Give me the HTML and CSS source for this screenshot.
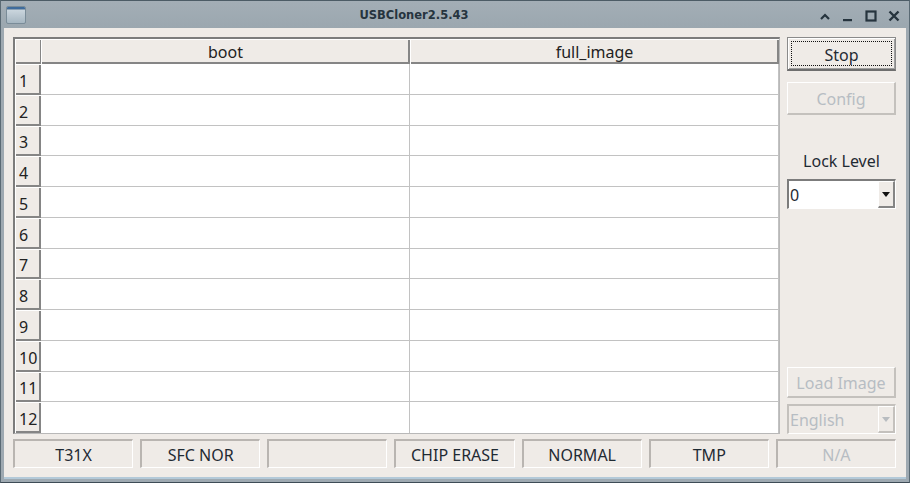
FILE: index.html
```html
<!DOCTYPE html>
<html>
<head>
<meta charset="utf-8">
<link rel="stylesheet" href="styles.css">
</head>
<body>
<div class="window">
  <div class="titlebar">
    <div class="appicon"><div class="appicon-bar"></div></div>
    <div class="title">USBCloner2.5.43</div>
    <div class="wbtns">
      <svg class="wbtn" width="12" height="12" viewBox="0 0 12 12"><path d="M2 9 L6 5 L10 9" fill="none" stroke="#26343e" stroke-width="2.2"/></svg>
      <svg class="wbtn" width="12" height="12" viewBox="0 0 12 12"><rect x="1" y="9" width="9" height="2.2" fill="#26343e"/></svg>
      <svg class="wbtn" width="12" height="12" viewBox="0 0 12 12"><rect x="1.5" y="1.5" width="9" height="9" fill="none" stroke="#26343e" stroke-width="2.2"/></svg>
      <svg class="wbtn" width="12" height="12" viewBox="0 0 12 12"><path d="M1.5 1.5 L10.5 10.5 M10.5 1.5 L1.5 10.5" fill="none" stroke="#26343e" stroke-width="2.4"/></svg>
    </div>
  </div>
  <div class="body">
    <div class="main">
      <div class="table">
        <div class="hcell corner"></div>
        <div class="hcell">boot</div>
        <div class="hcell">full_image</div>
        <div class="rh">1</div><div class="cell"></div><div class="cell"></div>
        <div class="rh">2</div><div class="cell"></div><div class="cell"></div>
        <div class="rh">3</div><div class="cell"></div><div class="cell"></div>
        <div class="rh">4</div><div class="cell"></div><div class="cell"></div>
        <div class="rh">5</div><div class="cell"></div><div class="cell"></div>
        <div class="rh">6</div><div class="cell"></div><div class="cell"></div>
        <div class="rh">7</div><div class="cell"></div><div class="cell"></div>
        <div class="rh">8</div><div class="cell"></div><div class="cell"></div>
        <div class="rh">9</div><div class="cell"></div><div class="cell"></div>
        <div class="rh">10</div><div class="cell"></div><div class="cell"></div>
        <div class="rh">11</div><div class="cell"></div><div class="cell"></div>
        <div class="rh last">12</div><div class="cell last"></div><div class="cell last"></div>
      </div>
      <div class="side">
        <div class="btn default"><span class="focus">Stop</span></div>
        <div class="btn disabled config">Config</div>
        <div class="lock-label">Lock Level</div>
        <div class="combo">
          <span class="combo-text">0</span>
          <span class="combo-arrow"><svg width="8" height="5" viewBox="0 0 8 5"><path d="M0 0 L8 0 L4 5 Z" fill="#111"/></svg></span>
        </div>
        <div class="spacer"></div>
        <div class="btn disabled load">Load Image</div>
        <div class="combo disabled">
          <span class="combo-text">English</span>
          <span class="combo-arrow"><svg width="8" height="5" viewBox="0 0 8 5"><path d="M0 0 L8 0 L4 5 Z" fill="#b8bcc0"/></svg></span>
        </div>
      </div>
    </div>
    <div class="status">
      <div class="slabel">T31X</div>
      <div class="slabel">SFC NOR</div>
      <div class="slabel"></div>
      <div class="slabel">CHIP ERASE</div>
      <div class="slabel">NORMAL</div>
      <div class="slabel">TMP</div>
      <div class="slabel dis">N/A</div>
    </div>
  </div>
</div>
</body>
</html>
```
FILE: styles.css
```css
* { box-sizing: border-box; }
html, body { margin: 0; padding: 0; }
body {
  width: 910px;
  height: 483px;
  overflow: hidden;
  font-family: "Noto Sans", "Open Sans", sans-serif;
  font-size: 16px;
  color: #1f2a33;
  background: #4a5a64;
}
.window {
  width: 910px;
  height: 483px;
  display: flex;
  flex-direction: column;
  background: #9ea9b1;
  border-top: 1px solid #4c5c66;
  border-left: 1px solid #5a6a74;
  border-right: 1px solid #5a6a74;
  border-bottom: 1px solid #3e4c56;
}
.titlebar {
  height: 27px;
  display: flex;
  align-items: center;
  position: relative;
  background: linear-gradient(#a3aeb6, #9ba7af);
}
.appicon {
  margin-left: 5px;
  width: 20px;
  height: 18px;
  border: 1px solid #7a8c98;
  border-radius: 2px;
  background: linear-gradient(#d3dde4, #a6b6c1);
  overflow: hidden;
}
.appicon-bar {
  height: 3px;
  background: #3f6c9c;
  border-bottom: 1px solid #8aa0b4;
}
.title {
  position: absolute;
  left: 0;
  width: 826px;
  text-align: center;
  font-family: "DejaVu Sans", sans-serif;
  font-weight: bold;
  font-size: 11.5px;
  color: #26343e;
  top: 7px;
  pointer-events: none;
}
.wbtns {
  margin-left: auto;
  margin-right: 9px;
  display: flex;
  gap: 11px;
  align-items: center;
  margin-top: 2px;
}
.body {
  flex: 1;
  margin: 0 3px 3px 3px;
  background: #efebe7;
  padding: 9px 10px 9px 9px;
  display: flex;
  flex-direction: column;
  gap: 5px;
  border-bottom: 2px solid #b3c9d8;
}
.main {
  flex: 1;
  display: flex;
  gap: 7px;
}
.table {
  flex: 1;
  display: grid;
  grid-template-columns: 26px 1fr 1fr;
  grid-template-rows: 25px repeat(12, 1fr);
  border-top: 2px solid #7c7c7c;
  border-left: 2px solid #7c7c7c;
  border-right: 1px solid #b8b8b8;
  border-bottom: 1px solid #b8b8b8;
  background: #fff;
}
.hcell {
  background: #efebe7;
  box-shadow: inset 1px 1px 0 #ffffff, inset -2px -2px 0 #858585;
  display: flex;
  align-items: center;
  justify-content: center;
  color: #222;
  padding-top: 1px;
}
.corner {
  box-shadow: inset 1px 1px 0 #ffffff, inset -1px -2px 0 #858585;
}
.rh {
  background: #efebe7;
  box-shadow: inset 1px 1px 0 #ffffff, inset -2px -2px 0 #858585;
  display: flex;
  align-items: center;
  padding-left: 4px;
  padding-top: 3px;
  color: #222;
}
.cell {
  background: #fff;
  border-right: 1px solid #c2c2c2;
  border-bottom: 1px solid #c2c2c2;
}
.cell.last { border-bottom: none; }
.side {
  width: 109px;
  display: flex;
  flex-direction: column;
}
.btn {
  display: flex;
  align-items: center;
  justify-content: center;
  background: #efebe7;
  color: #1f2a33;
  padding-top: 2px;
}
.btn.default {
  height: 34px;
  border: 1px solid #8a8a8a;
  border-bottom: 2px solid #6e6e6e;
  box-shadow: inset 1px 1px 0 #ffffff, inset -1px -1px 0 #a0a0a0;
  padding: 3px;
}
.focus {
  width: 100%;
  height: 100%;
  border: 1px dotted #111;
  display: flex;
  align-items: center;
  justify-content: center;
  padding-top: 2px;
}
.btn.disabled {
  color: #b7bdc3;
  border-top: 1px solid #ffffff;
  border-left: 1px solid #ffffff;
  border-right: 2px solid #c4c1bd;
  border-bottom: 2px solid #c4c1bd;
}
.btn.config {
  margin-top: 11px;
  height: 33px;
}
.lock-label {
  margin-top: 35px;
  text-align: center;
  color: #1f2a33;
  height: 22px;
}
.combo {
  margin-top: 7px;
  height: 30px;
  background: #fff;
  border-top: 2px solid #7c7c7c;
  border-left: 2px solid #7c7c7c;
  border-right: 1px solid #fff;
  border-bottom: 1px solid #fff;
  display: flex;
  align-items: stretch;
}
.combo-text {
  flex: 1;
  padding-left: 1px;
  padding-top: 1px;
  display: flex;
  align-items: center;
  color: #1f2a33;
}
.combo-arrow {
  width: 17px;
  background: #efebe7;
  border-top: 1px solid #fff;
  border-left: 1px solid #fff;
  border-right: 2px solid #858585;
  border-bottom: 2px solid #858585;
  display: flex;
  align-items: center;
  justify-content: center;
}
.combo.disabled {
  margin-top: 6px;
  background: #efebe7;
  border-top: 2px solid #c4c1bd;
  border-left: 2px solid #c4c1bd;
}
.combo.disabled .combo-text { color: #b7bdc3; }
.combo.disabled .combo-arrow {
  border-right: 2px solid #c4c1bd;
  border-bottom: 2px solid #c4c1bd;
}
.spacer { flex: 1; }
.btn.load { height: 31px; }
.status {
  height: 29px;
  display: flex;
  gap: 7px;
}
.slabel {
  flex: 1;
  border-top: 2px solid #b9b5b1;
  border-left: 2px solid #b9b5b1;
  border-right: 1px solid #ffffff;
  border-bottom: 1px solid #ffffff;
  display: flex;
  align-items: center;
  justify-content: center;
  color: #1f2a33;
  padding-top: 2px;
}
.slabel.dis { color: #b7bdc3; }
```
